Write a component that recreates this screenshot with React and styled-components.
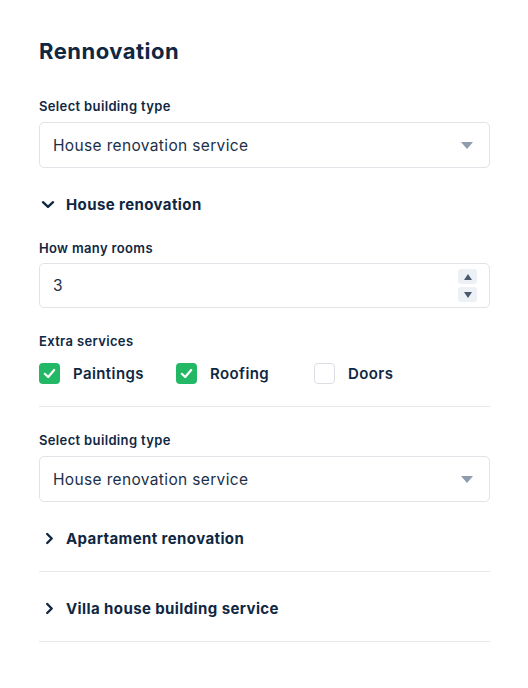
import React, { useState } from 'react'
import styled, { createGlobalStyle } from 'styled-components'

const GlobalStyle = createGlobalStyle`
  body {
    margin: 0;
    background: #ffffff;
    font-family: Inter, "Noto Sans", sans-serif;
    color: #0f2742;
  }
`

const Panel = styled.div`
  width: 451px;
  padding: 37px 0 40px 39px;
  display: flex;
  flex-direction: column;
`

const Title = styled.h1`
  margin: 0;
  font-size: 22px;
  line-height: 28px;
  font-weight: 700;
  letter-spacing: 0.5px;
  color: #0f2742;
`

const Field = styled.div`
  display: flex;
  flex-direction: column;
  gap: ${(p) => p.$gap || 8}px;
  margin-top: ${(p) => p.$top}px;
`

const Label = styled.label`
  font-size: 13px;
  line-height: 16px;
  font-weight: 600;
  letter-spacing: 0.35px;
  color: #0f2742;
`

const Box = styled.div`
  height: ${(p) => p.$h}px;
  box-sizing: border-box;
  border: 1px solid #e0e4e9;
  border-radius: 5px;
  display: flex;
  align-items: center;
  padding: 0 8px 0 13px;
  font-size: 15.5px;
  color: #1b2f48;
  letter-spacing: 0.35px;
`

const Value = styled.span`
  flex: 1;
`

const Caret = styled.span`
  width: 0;
  height: 0;
  border-left: 6px solid transparent;
  border-right: 6px solid transparent;
  border-top: 7px solid #8f9cae;
  margin-right: 8px;
`

const Spinner = styled.div`
  display: flex;
  flex-direction: column;
  gap: 3px;
  margin-right: 4px;
`

const SpinButton = styled.div`
  width: 19px;
  height: 15px;
  border-radius: 3px;
  background: #edf0f5;
  display: flex;
  align-items: center;
  justify-content: center;

  &::after {
    content: '';
    width: 0;
    height: 0;
    border-left: 4.5px solid transparent;
    border-right: 4.5px solid transparent;
    ${(p) => (p.$up ? 'border-bottom: 6px solid #4a5a6e;' : 'border-top: 6px solid #4a5a6e;')}
  }
`

const Section = styled.div`
  display: flex;
  flex-direction: column;
  padding-bottom: ${(p) => p.$bottom}px;
  border-bottom: ${(p) => (p.$line ? '1px solid #e6e8ec' : 'none')};
`

const Toggle = styled.div`
  display: flex;
  align-items: center;
  height: 24px;
  margin-top: ${(p) => p.$top}px;
  font-size: 15px;
  font-weight: 700;
  letter-spacing: 0.4px;
  color: #0f2742;
  cursor: pointer;
`

const ToggleIcon = styled.span`
  box-sizing: border-box;
  width: 17px;
  margin-right: 10px;
  display: flex;
  justify-content: center;
  padding-left: ${(p) => (p.$open ? 0 : 3)}px;
`

const Checks = styled.div`
  display: flex;
  margin-top: 6px;
`

const CheckItem = styled.label`
  display: flex;
  align-items: center;
  gap: 13px;
  width: ${(p) => p.$w}px;
  height: 21px;
  font-size: 15px;
  font-weight: 600;
  letter-spacing: 0.4px;
  color: #0f2742;
  cursor: pointer;
`

const Box21 = styled.span`
  width: 21px;
  height: 21px;
  box-sizing: border-box;
  border-radius: 4px;
  display: flex;
  align-items: center;
  justify-content: center;
  background: ${(p) => (p.$on ? '#23b865' : '#ffffff')};
  border: ${(p) => (p.$on ? 'none' : '1.5px solid #dadee4')};
`

const ChevronDown = () => (
  <svg width="14" height="9" viewBox="0 0 14 9">
    <path d="M2 2.2l5 4.6 5-4.6" fill="none" stroke="#0f2742" strokeWidth="2.4" strokeLinecap="round" strokeLinejoin="round" />
  </svg>
)

const ChevronRight = () => (
  <svg width="9" height="13" viewBox="0 0 9 13">
    <path d="M2.2 2l4.5 4.5L2.2 11" fill="none" stroke="#0f2742" strokeWidth="2.4" strokeLinecap="round" strokeLinejoin="round" />
  </svg>
)

const Tick = () => (
  <svg width="13" height="11" viewBox="0 0 13 11">
    <path d="M1.8 5.8l3.4 3.2L11.2 2" fill="none" stroke="#ffffff" strokeWidth="2.2" strokeLinecap="round" strokeLinejoin="round" />
  </svg>
)

const services = [
  { name: 'Paintings', on: true, w: 137 },
  { name: 'Roofing', on: true, w: 138 },
  { name: 'Doors', on: false, w: 120 },
]

const Check = ({ item }) => (
  <CheckItem $w={item.w}>
    <Box21 $on={item.on}>{item.on && <Tick />}</Box21>
    {item.name}
  </CheckItem>
)

const Select = ({ top }) => (
  <Field $top={top}>
    <Label>Select building type</Label>
    <Box $h={46}>
      <Value>House renovation service</Value>
      <Caret />
    </Box>
  </Field>
)

const App = () => {
  const [rooms] = useState(3)

  return (
    <>
      <GlobalStyle />
      <Panel>
        <Title>Rennovation</Title>
        <Select top={33} />

        <Section $line $bottom={22}>
          <Toggle $top={24}>
            <ToggleIcon $open>
              <ChevronDown />
            </ToggleIcon>
            House renovation
          </Toggle>
          <Field $top={24} $gap={7}>
            <Label>How many rooms</Label>
            <Box $h={45}>
              <Value>{rooms}</Value>
              <Spinner>
                <SpinButton $up />
                <SpinButton />
              </Spinner>
            </Box>
          </Field>
          <Field $top={25}>
            <Label>Extra services</Label>
            <Checks>
              {services.map((s) => (
                <Check key={s.name} item={s} />
              ))}
            </Checks>
          </Field>
        </Section>

        <Select top={25} />

        <Section $line $bottom={21}>
          <Toggle $top={24}>
            <ToggleIcon>
              <ChevronRight />
            </ToggleIcon>
            Apartament renovation
          </Toggle>
        </Section>

        <Section $line $bottom={21}>
          <Toggle $top={24}>
            <ToggleIcon>
              <ChevronRight />
            </ToggleIcon>
            Villa house building service
          </Toggle>
        </Section>
      </Panel>
    </>
  )
}

export default App
